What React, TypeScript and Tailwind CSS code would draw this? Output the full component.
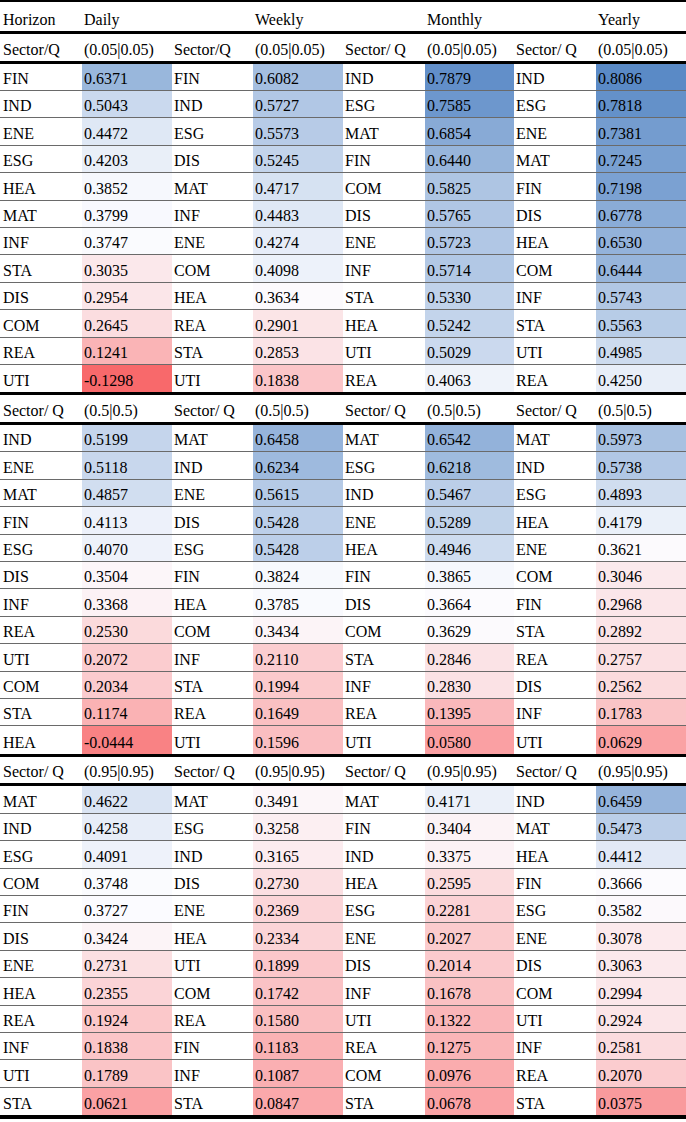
import React from "react";

type Col = { s: string[]; v: number[] };
type Block = { q: string; heads: string[]; cols: Col[] };

const BLOCKS: Block[] = [
  {
    q: "(0.05|0.05)",
    heads: ["Sector/Q", "Sector/Q", "Sector/ Q", "Sector/ Q"],
    cols: [
      {
        s: ["FIN", "IND", "ENE", "ESG", "HEA", "MAT", "INF", "STA", "DIS", "COM", "REA", "UTI"],
        v: [0.6371, 0.5043, 0.4472, 0.4203, 0.3852, 0.3799, 0.3747, 0.3035, 0.2954, 0.2645, 0.1241, -0.1298],
      },
      {
        s: ["FIN", "IND", "ESG", "DIS", "MAT", "INF", "ENE", "COM", "HEA", "REA", "STA", "UTI"],
        v: [0.6082, 0.5727, 0.5573, 0.5245, 0.4717, 0.4483, 0.4274, 0.4098, 0.3634, 0.2901, 0.2853, 0.1838],
      },
      {
        s: ["IND", "ESG", "MAT", "FIN", "COM", "DIS", "ENE", "INF", "STA", "HEA", "UTI", "REA"],
        v: [0.7879, 0.7585, 0.6854, 0.644, 0.5825, 0.5765, 0.5723, 0.5714, 0.533, 0.5242, 0.5029, 0.4063],
      },
      {
        s: ["IND", "ESG", "ENE", "MAT", "FIN", "DIS", "HEA", "COM", "INF", "STA", "UTI", "REA"],
        v: [0.8086, 0.7818, 0.7381, 0.7245, 0.7198, 0.6778, 0.653, 0.6444, 0.5743, 0.5563, 0.4985, 0.425],
      },
    ],
  },
  {
    q: "(0.5|0.5)",
    heads: ["Sector/ Q", "Sector/ Q", "Sector/ Q", "Sector/ Q"],
    cols: [
      {
        s: ["IND", "ENE", "MAT", "FIN", "ESG", "DIS", "INF", "REA", "UTI", "COM", "STA", "HEA"],
        v: [0.5199, 0.5118, 0.4857, 0.4113, 0.407, 0.3504, 0.3368, 0.253, 0.2072, 0.2034, 0.1174, -0.0444],
      },
      {
        s: ["MAT", "IND", "ENE", "DIS", "ESG", "FIN", "HEA", "COM", "INF", "STA", "REA", "UTI"],
        v: [0.6458, 0.6234, 0.5615, 0.5428, 0.5428, 0.3824, 0.3785, 0.3434, 0.211, 0.1994, 0.1649, 0.1596],
      },
      {
        s: ["MAT", "ESG", "IND", "ENE", "HEA", "FIN", "DIS", "COM", "STA", "INF", "REA", "UTI"],
        v: [0.6542, 0.6218, 0.5467, 0.5289, 0.4946, 0.3865, 0.3664, 0.3629, 0.2846, 0.283, 0.1395, 0.058],
      },
      {
        s: ["MAT", "IND", "ESG", "HEA", "ENE", "COM", "FIN", "STA", "REA", "DIS", "INF", "UTI"],
        v: [0.5973, 0.5738, 0.4893, 0.4179, 0.3621, 0.3046, 0.2968, 0.2892, 0.2757, 0.2562, 0.1783, 0.0629],
      },
    ],
  },
  {
    q: "(0.95|0.95)",
    heads: ["Sector/ Q", "Sector/ Q", "Sector/ Q", "Sector/ Q"],
    cols: [
      {
        s: ["MAT", "IND", "ESG", "COM", "FIN", "DIS", "ENE", "HEA", "REA", "INF", "UTI", "STA"],
        v: [0.4622, 0.4258, 0.4091, 0.3748, 0.3727, 0.3424, 0.2731, 0.2355, 0.1924, 0.1838, 0.1789, 0.0621],
      },
      {
        s: ["MAT", "ESG", "IND", "DIS", "ENE", "HEA", "UTI", "COM", "REA", "FIN", "INF", "STA"],
        v: [0.3491, 0.3258, 0.3165, 0.273, 0.2369, 0.2334, 0.1899, 0.1742, 0.158, 0.1183, 0.1087, 0.0847],
      },
      {
        s: ["MAT", "FIN", "IND", "HEA", "ESG", "ENE", "DIS", "INF", "UTI", "REA", "COM", "STA"],
        v: [0.4171, 0.3404, 0.3375, 0.2595, 0.2281, 0.2027, 0.2014, 0.1678, 0.1322, 0.1275, 0.0976, 0.0678],
      },
      {
        s: ["IND", "MAT", "HEA", "FIN", "ESG", "ENE", "DIS", "COM", "UTI", "INF", "REA", "STA"],
        v: [0.6459, 0.5473, 0.4412, 0.3666, 0.3582, 0.3078, 0.3063, 0.2994, 0.2924, 0.2581, 0.207, 0.0375],
      },
    ],
  },
];

const ALL = BLOCKS.flatMap((b) => b.cols.flatMap((c) => c.v));
const MIN = Math.min(...ALL);
const MAX = Math.max(...ALL);
const MID = 0.37;

// excel style red - white - blue scale
function heat(v: number) {
  const w = [252, 252, 255];
  const red = [248, 105, 107];
  const blue = [90, 138, 198];
  let t: number;
  let to: number[];
  if (v >= MID) {
    t = (v - MID) / (MAX - MID);
    to = blue;
  } else {
    t = (MID - v) / (MID - MIN);
    to = red;
  }
  const c = w.map((x, i) => Math.round(x + (to[i] - x) * t));
  return `rgb(${c[0]}, ${c[1]}, ${c[2]})`;
}

const GRID = "grid grid-cols-[82px_90px_81px_90px_82px_89px_82px_90px]";
const CELL = "flex items-end pb-[2px] pl-[2px] leading-[18px] whitespace-nowrap";

function BlockRows({ block, last }: { block: Block; last: boolean }) {
  return (
    <div className={last ? "border-b-4 border-black" : "border-b-[3px] border-black"}>
      <div className={`${GRID} h-[29.7px] border-b-[3px] border-black`}>
        {block.heads.map((h, i) => (
          <React.Fragment key={i}>
            <div className={`${CELL} ${i === 0 ? "pl-[3px]" : ""}`}>{h}</div>
            <div className={CELL}>{block.q}</div>
          </React.Fragment>
        ))}
      </div>
      {block.cols[0].s.map((_, r) => (
        <div
          key={r}
          className={`${GRID} h-[27.4px] ${r < 11 ? "border-b border-[#6a6a6a]" : ""}`}
        >
          {block.cols.map((c, i) => (
            <React.Fragment key={i}>
              <div className={`${CELL} ${i === 0 ? "pl-[3px]" : ""}`}>{c.s[r]}</div>
              <div className={CELL} style={{ backgroundColor: heat(c.v[r]) }}>
                {c.v[r].toFixed(4)}
              </div>
            </React.Fragment>
          ))}
        </div>
      ))}
    </div>
  );
}

export default function App() {
  return (
    <div className="w-[686px] h-[1122px] bg-white text-black text-[16px] font-['Liberation_Serif','Times_New_Roman',serif]">
      <div className="border-t-2 border-black">
        <div className={`${GRID} h-[32px] border-b-[3px] border-black`}>
          <div className={`${CELL} pl-[3px]`}>Horizon</div>
          <div className={`${CELL} col-span-2`}>Daily</div>
          <div className={`${CELL} col-span-2`}>Weekly</div>
          <div className={`${CELL} col-span-2`}>Monthly</div>
          <div className={CELL}>Yearly</div>
        </div>
        {BLOCKS.map((b, i) => (
          <BlockRows key={i} block={b} last={i === BLOCKS.length - 1} />
        ))}
      </div>
    </div>
  );
}
